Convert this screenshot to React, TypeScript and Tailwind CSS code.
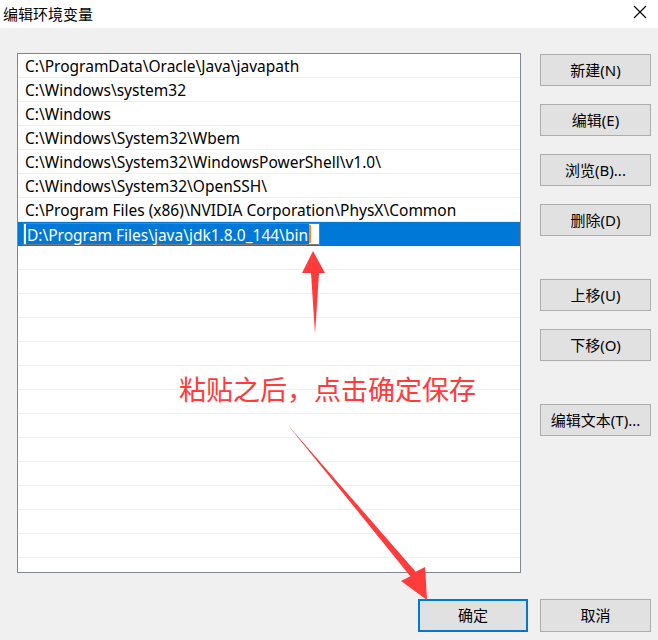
import React from "react";

const paths = [
  "C:\\ProgramData\\Oracle\\Java\\javapath",
  "C:\\Windows\\system32",
  "C:\\Windows",
  "C:\\Windows\\System32\\Wbem",
  "C:\\Windows\\System32\\WindowsPowerShell\\v1.0\\",
  "C:\\Windows\\System32\\OpenSSH\\",
  "C:\\Program Files (x86)\\NVIDIA Corporation\\PhysX\\Common",
];

const editing = "D:\\Program Files\\java\\jdk1.8.0_144\\bin";

function Btn({ label, className = "" }: { label: string; className?: string }) {
  return (
    <div
      className={
        "h-[32px] w-[111px] flex items-center justify-center bg-[#e1e1e1] border border-[#adadad] text-[15px] text-[#000] " +
        className
      }
    >
      {label}
    </div>
  );
}

export default function App() {
  const empty = Array.from({ length: 14 });
  return (
    <div
      className="relative w-[658px] h-[640px] bg-[#f0f0f0] overflow-hidden text-black"
      style={{ fontFamily: '"Noto Sans", "Noto Sans CJK SC", sans-serif' }}
    >
      {/* title bar */}
      <div className="h-[28px] bg-white flex items-center justify-between pl-[3px] pr-[11px]">
        <span className="text-[15px] leading-none">编辑环境变量</span>
        <svg width="14" height="14" viewBox="0 0 14 14" className="mt-[-4px]">
          <path d="M1 1 L13 13 M13 1 L1 13" stroke="#000" strokeWidth="1.1" fill="none" />
        </svg>
      </div>

      <div className="flex pl-[17px] pt-[25px]">
        {/* path list */}
        <div className="w-[504px] h-[520px] border border-[#828790] bg-white overflow-hidden">
          {paths.map((p) => (
            <div
              key={p}
              className="h-[24px] border-b border-[#efefef] flex items-center pl-[7px] pt-[3px] text-[15.5px] leading-none whitespace-nowrap"
            >
              {p}
            </div>
          ))}
          <div className="h-[24px] bg-[#0078d7] flex items-center pl-[5px]">
            <div className="h-[22px] w-[297px] bg-white border border-[#7a7a7a] flex items-center pl-[2px]">
              <span className="bg-[#0078d7] text-white text-[15.5px] leading-[18px] pt-[2px] whitespace-nowrap px-[1px]">
                {editing}
              </span>
              <span className="w-[2px] h-[18px] bg-[#ff8c1a]" />
            </div>
          </div>
          {empty.map((_, i) => (
            <div key={i} className="h-[24px] border-b border-[#efefef]" />
          ))}
        </div>

        {/* side buttons */}
        <div className="ml-[19px] pt-[1px] flex flex-col">
          <Btn label="新建(N)" />
          <Btn label="编辑(E)" className="mt-[18px]" />
          <Btn label="浏览(B)..." className="mt-[18px]" />
          <Btn label="删除(D)" className="mt-[18px]" />
          <Btn label="上移(U)" className="mt-[43px]" />
          <Btn label="下移(O)" className="mt-[18px]" />
          <Btn label="编辑文本(T)..." className="mt-[43px]" />
        </div>
      </div>

      {/* bottom buttons */}
      <div className="flex justify-end gap-[12px] pr-[7px] mt-[26px]">
        <div className="h-[33px] w-[110px] flex items-center justify-center bg-[#e1e1e1] border-2 border-[#0078d7] text-[15px]">
          确定
        </div>
        <Btn label="取消" className="h-[33px]" />
      </div>

      {/* red annotation */}
      <div
        className="absolute left-[179px] top-[375px] text-[27px] leading-none text-[#ff3b3b] whitespace-nowrap"
        style={{ fontFamily: '"Noto Sans CJK SC", sans-serif' }}
      >
        粘贴之后，点击确定保存
      </div>
      <svg className="absolute left-0 top-0 pointer-events-none" width="658" height="640">
        <polygon points="313,251 325,273 319,273 315,334 311,273 302,273" fill="#ff3b3b" />
        <polygon points="287,424 415.7,571.8 425,567 427,600 401,581 410.3,576.2" fill="#ff3b3b" />
      </svg>
    </div>
  );
}
